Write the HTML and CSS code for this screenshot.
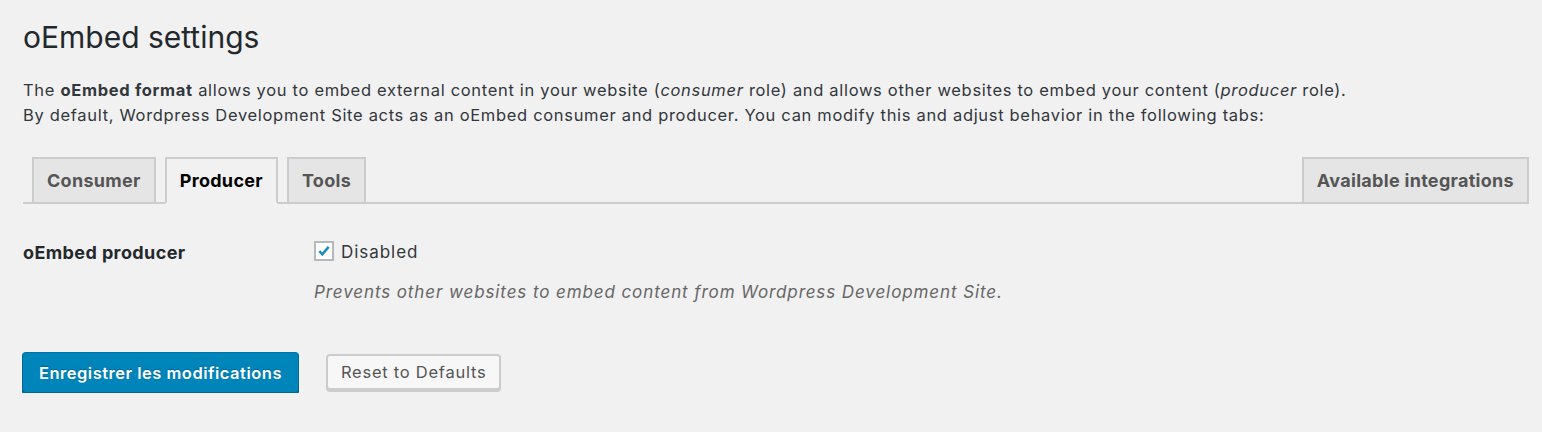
FILE: index.html
```html
<!DOCTYPE html>
<html lang="en">
<head>
<meta charset="utf-8">
<title>oEmbed settings</title>
<link rel="stylesheet" href="styles.css">
</head>
<body>
<div class="wrap">
  <h1 class="title">oEmbed settings</h1>
  <p class="intro">The <strong>oEmbed format</strong> allows you to embed external content in your website (<em>consumer</em> role) and allows other websites to embed your content (<em>producer</em> role).<br>By default, Wordpress Development Site acts as an oEmbed consumer and producer. You can modify this and adjust behavior in the following tabs:</p>

  <nav class="tabs">
    <a class="tab">Consumer</a>
    <a class="tab active">Producer</a>
    <a class="tab">Tools</a>
    <span class="tabs-spacer"></span>
    <a class="tab">Available integrations</a>
  </nav>

  <div class="form-row">
    <div class="label">oEmbed producer</div>
    <div class="field">
      <label class="check">
        <span class="box"><svg viewBox="0 0 20 20" width="18" height="18"><path d="M4.2 10.2 L7.9 14.2 L15.8 4.8" fill="none" stroke="#1e8cbe" stroke-width="3.2" stroke-linecap="butt" stroke-linejoin="miter"/></svg></span>
        <span class="check-text">Disabled</span>
      </label>
      <p class="desc">Prevents other websites to embed content from Wordpress Development Site.</p>
    </div>
  </div>

  <div class="actions">
    <button class="btn primary">Enregistrer les modifications</button>
    <button class="btn secondary">Reset to Defaults</button>
  </div>
</div>
</body>
</html>
```
FILE: styles.css
```css
html, body {
  margin: 0;
  padding: 0;
  background: #f1f1f1;
}
body {
  font-family: Inter, "Noto Sans", "Liberation Sans", sans-serif;
  color: #23282d;
  font-size: 16.5px;
}
.wrap {
  padding: 0 13px 0 23px;
}
.title {
  margin: 0;
  padding-top: 17px;
  font-size: 30px;
  font-weight: 400;
  line-height: 40px;
  color: #23282d;
}
.intro {
  margin: 21px 0 0;
  font-size: 16.5px;
  letter-spacing: 0.68px;
  line-height: 25px;
  color: #32373c;
}
.intro strong { font-weight: 700; }
.tabs {
  display: flex;
  align-items: flex-end;
  margin-top: 29px;
  padding-left: 9px;
  border-bottom: 2px solid #ccc;
  height: 45px;
  box-sizing: content-box;
}
.tabs-spacer { flex: 1; }
.tab {
  display: block;
  box-sizing: border-box;
  height: 47px;
  margin-bottom: -2px;
  padding: 0 13px;
  margin-right: 9px;
  border: 2px solid #ccc;
  background: #e5e5e5;
  color: #555;
  font-weight: 700;
  font-size: 18px;
  letter-spacing: 0.3px;
  line-height: 43px;
}
.tab:last-child { margin-right: 0; }
.tab.active {
  background: #f1f1f1;
  border-bottom-color: #f1f1f1;
  color: #000;
}
.form-row {
  display: grid;
  grid-template-columns: 291px 1fr;
  margin-top: 36px;
}
.label {
  font-weight: 700;
  font-size: 18px;
  letter-spacing: 0.4px;
  line-height: 24px;
  padding-top: 1px;
}
.check {
  display: flex;
  align-items: center;
  gap: 7px;
  height: 22px;
}
.box {
  width: 20px;
  height: 20px;
  box-sizing: border-box;
  border: 2px solid #b4b9be;
  background: #fff;
  display: flex;
  align-items: center;
  justify-content: center;
}
.box svg { display: block; }
.check-text {
  font-size: 17px;
  letter-spacing: 0.95px;
  color: #32373c;
  padding-top: 2px;
}
.desc {
  margin: 19px 0 0;
  font-style: italic;
  color: #666;
  font-size: 17px;
  letter-spacing: 0.9px;
  line-height: 22px;
}
.actions {
  display: flex;
  align-items: flex-start;
  gap: 27px;
  margin-top: 49px;
  margin-left: -1px;
}
.btn {
  font-family: inherit;
  font-size: 16.5px;
  border-radius: 4px;
  cursor: pointer;
}
.primary {
  height: 41px;
  padding: 0 16px;
  background: #0085ba;
  border: 1px solid;
  border-color: #0073aa #006799 #006799;
  box-shadow: 0 2px 0 #006799;
  color: #fff;
  font-weight: 600;
  letter-spacing: 0.5px;
  text-shadow: 0 -1px 1px #006799;
}
.secondary {
  margin-top: 2px;
  height: 36px;
  padding: 0 13px;
  background: #f7f7f7;
  border: 2px solid #ccc;
  box-shadow: 0 2px 0 #ccc;
  color: #555;
  font-weight: 400;
  letter-spacing: 0.75px;
}
```
